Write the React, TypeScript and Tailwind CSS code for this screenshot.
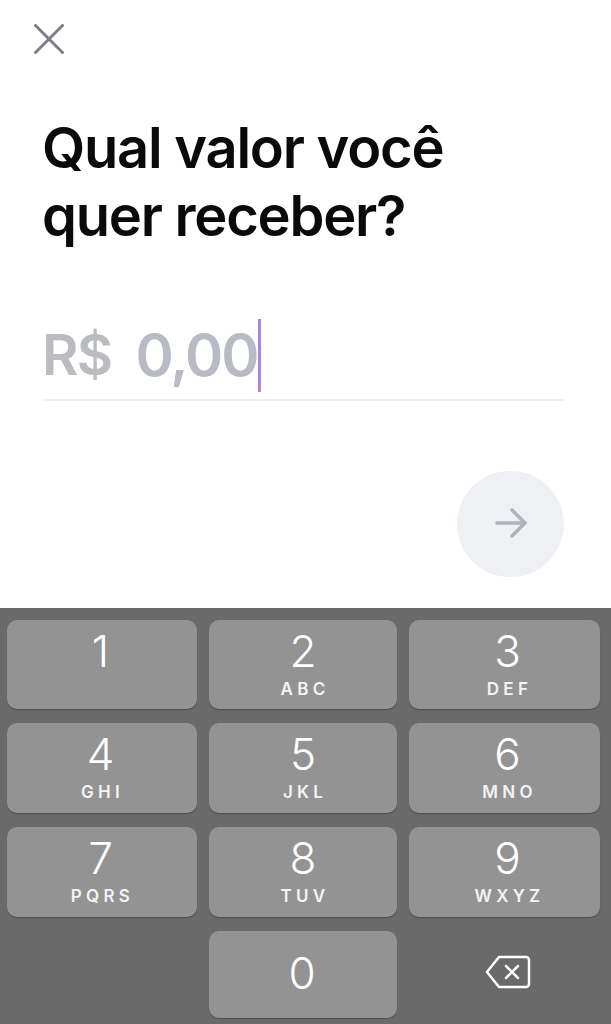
const keys = [
  { n: "1", l: "", c: "pr-[3px]" },
  { n: "2", l: "ABC", c: "" },
  { n: "3", l: "DEF", c: "pl-[6px]" },
  { n: "4", l: "GHI", c: "pr-[3px]" },
  { n: "5", l: "JKL", c: "" },
  { n: "6", l: "MNO", c: "pl-[6px]" },
  { n: "7", l: "PQRS", c: "pr-[3px]" },
  { n: "8", l: "TUV", c: "" },
  { n: "9", l: "WXYZ", c: "pl-[6px]" },
];

function Key({ n, l, c }: { n: string; l: string; c: string }) {
  return (
    <div className={`flex h-full flex-col items-center rounded-[10px] bg-[#939393] pt-[6px] shadow-[0_1px_1px_#4e4e4e] ${c}`}>
      <span className="text-[44px] font-light leading-[50px] text-white">{n}</span>
      <span className="mt-[3px] pl-[4px] text-[17px] font-semibold leading-[20px] tracking-[0.25em] text-[#f4f4f4]">{l}</span>
    </div>
  );
}

export default function App() {
  return (
    <div className="flex h-[1024px] w-[611px] flex-col overflow-hidden bg-white font-['Inter',sans-serif]">
      <div className="flex h-[608px] flex-col px-[42px]">
        <svg className="ml-[-8px] mt-[24px] h-[30px] w-[30px]" viewBox="0 0 30 30" fill="none" stroke="#7b7f87" strokeWidth="3" strokeLinecap="round">
          <path d="M1.5 1.5 28.5 28.5M28.5 1.5 1.5 28.5" />
        </svg>
        <h1 className="mt-[60px] text-[56px] font-semibold leading-[68px] tracking-[-0.022em] text-[#0a0a0a]">
          Qual valor você
          <br />
          quer receber?
        </h1>
        <div className="mr-[5px] mt-[69px] flex h-[82px] items-center border-b-2 border-[#f0f0f2] pb-[8px]">
          <span className="text-[56px] font-semibold leading-none tracking-[-0.03em] text-[#bbbcc0]">R$</span>
          <span className="ml-[24px] text-[58px] font-semibold leading-none tracking-[-0.035em] text-[#b9bbc4]">0,00</span>
          <span className="h-[73px] w-[3px] bg-[#b184d6]" />
        </div>
        <div className="mr-[5px] mt-[70px] flex justify-end">
          <div className="flex h-[106px] w-[107px] items-center justify-center rounded-full bg-[#eff0f4] pb-[2px]">
            <svg className="h-[32px] w-[32px]" viewBox="0 0 32 32" fill="none" stroke="#b0b2b9" strokeWidth="3.5" strokeLinecap="round" strokeLinejoin="round">
              <path d="M2 16H30M17 3 30 16 17 29" />
            </svg>
          </div>
        </div>
      </div>
      <div className="flex-1 bg-[#6a6a6a] px-[7px] pb-[6px] pt-[12px]">
        <div className="grid h-full grid-cols-[190px_188px_191px] grid-rows-[89px_90px_90px_87px] gap-x-[12px] gap-y-[14px]">
          {keys.map((k) => (
            <Key key={k.n} n={k.n} l={k.l} c={k.c} />
          ))}
          <div />
          <div className="flex h-full items-center justify-center rounded-[10px] bg-[#939393] pb-[3px] pr-[2px] shadow-[0_1px_1px_#4e4e4e]">
            <span className="text-[44px] font-light leading-[50px] text-white">0</span>
          </div>
          <div className="flex items-center justify-center pb-[6px] pl-[6px]">
            <svg className="h-[34px] w-[46px]" viewBox="0 0 46 34" fill="none" stroke="#ffffff" strokeWidth="2.5" strokeLinecap="round" strokeLinejoin="round">
              <path d="M14 2H41a3 3 0 0 1 3 3V29a3 3 0 0 1-3 3H14L2 17Z" />
              <path d="M21 11 33 23M33 11 21 23" />
            </svg>
          </div>
        </div>
      </div>
    </div>
  );
}
